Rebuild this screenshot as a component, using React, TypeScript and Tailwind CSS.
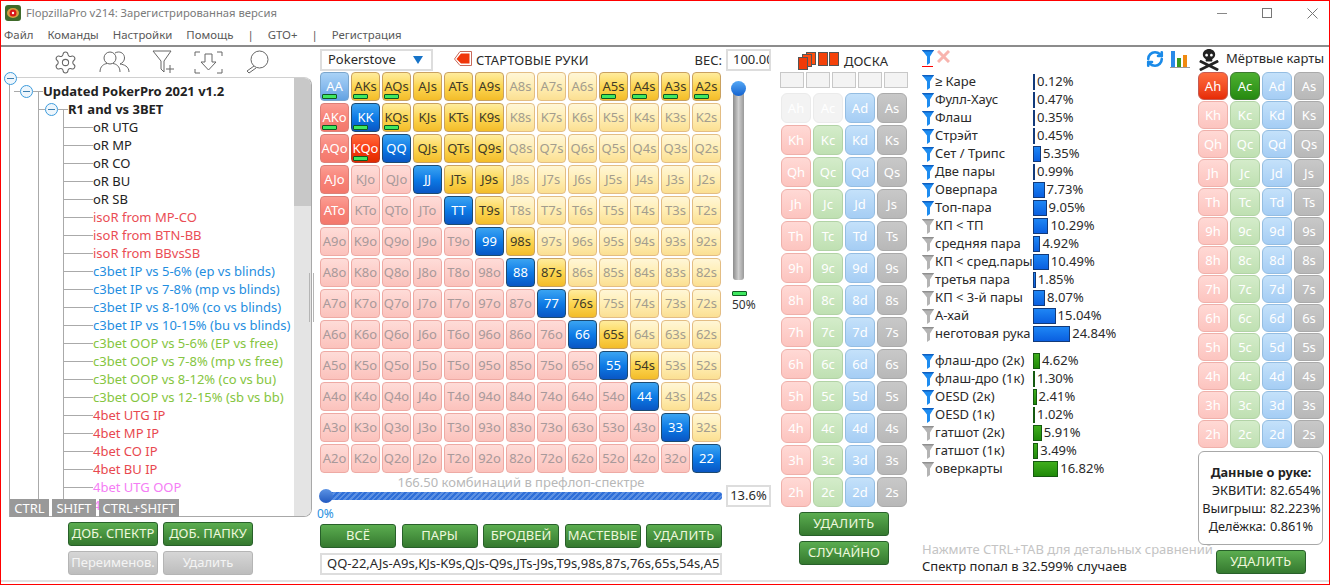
import { Settings, RefreshCw } from "lucide-react";
import { FaSkullCrossbones } from "react-icons/fa";

const FONT = "font-['Noto_Sans','Liberation_Sans',sans-serif]";

const RANKS = ["A", "K", "Q", "J", "T", "9", "8", "7", "6", "5", "4", "3", "2"];

const cellStyles = {
  gold: "bg-linear-to-b from-[#ffec9c] via-[#fcd650] to-[#f3bc28] border-[#c9a160] text-[#3f3a28]",
  paleGold: "bg-linear-to-b from-[#fff6d6] via-[#ffeeb4] to-[#fbdf92] border-[#e3bd84] text-[#a39d8e]",
  salmon: "bg-linear-to-b from-[#fb9d93] via-[#f88378] to-[#f3786c] border-[#dc8078] text-white",
  pink: "bg-linear-to-b from-[#fedcd8] via-[#fdcfca] to-[#fbc2bc] border-[#eeaaa4] text-[#a8999a]",
  red: "bg-linear-to-b from-[#ff6a3a] via-[#f93b10] to-[#e02a00] border-[#b8392a] text-white",
  blue: "bg-linear-to-b from-[#3aa4f2] via-[#0d7be6] to-[#0a56c4] border-[#1d4a70] text-white",
  lightBlue: "bg-linear-to-b from-[#a9d2f6] via-[#8abcee] to-[#62a2e2] border-[#7ba6cc] text-white",
};

const goldHands = new Set([
  "AKs", "AQs", "AJs", "ATs", "A9s", "A5s", "A4s", "A3s", "A2s",
  "KQs", "KJs", "KTs", "K9s",
  "QJs", "QTs", "Q9s",
  "JTs", "J9s", "T9s", "98s", "87s", "76s", "65s", "54s",
]);
const salmonHands = new Set(["AKo", "AQo", "AJo", "ATo"]);
const barHands = new Set(["AA", "AKs", "AQs", "A5s", "A4s", "A3s", "A2s", "AKo", "KK", "KQs", "KQo"]);

function handStyle(hand: string) {
  if (hand === "AA") return cellStyles.lightBlue;
  if (hand.length === 2) return cellStyles.blue;
  if (hand === "KQo") return cellStyles.red;
  if (goldHands.has(hand)) return cellStyles.gold;
  if (salmonHands.has(hand)) return cellStyles.salmon;
  return hand.endsWith("s") ? cellStyles.paleGold : cellStyles.pink;
}

function HandCell({ hand }: { hand: string }) {
  return (
    <div
      className={`relative flex h-[29px] w-[29px] items-center justify-center rounded-[4px] border text-[13px] leading-none ${handStyle(hand)}`}
    >
      <span className="-mt-px">{hand}</span>
      {barHands.has(hand) && (
        <span className="absolute bottom-px left-[1px] h-[5px] w-[15px] rounded-[1px] border border-[#0d5a20] bg-[#3fe860]" />
      )}
    </div>
  );
}

const suitStyles: Record<string, string> = {
  h: "bg-linear-to-b from-[#ffd9d5] to-[#fcc4bf] border-[#efb0aa]",
  c: "bg-linear-to-b from-[#d4ecca] to-[#bfe0b2] border-[#b2d3a6]",
  d: "bg-linear-to-b from-[#c4e1fa] to-[#a5cdf4] border-[#94bde2]",
  s: "bg-linear-to-b from-[#c8c8c8] to-[#b8b8b8] border-[#aaaaaa]",
};

function CardCell({ card, tall, variant }: { card: string; tall?: boolean; variant?: "faded" | "hotRed" | "hotGreen" }) {
  let style = suitStyles[card[1]];
  if (variant === "faded") style = "bg-[#f3f3f3] border-[#ebebeb]";
  if (variant === "hotRed") style = "bg-linear-to-b from-[#ff6b3c] to-[#e62a04] border-[#c65a50]";
  if (variant === "hotGreen") style = "bg-linear-to-b from-[#4cb030] to-[#268a10] border-[#3d7a30]";
  return (
    <div
      className={`flex w-[30px] items-center justify-center rounded-[6px] border text-[13px] leading-none text-white ${tall ? "h-[30px]" : "h-[28px]"} ${style}`}
    >
      {card}
    </div>
  );
}

function GreenButton({ children, className = "" }: { children: React.ReactNode; className?: string }) {
  return (
    <button className={`flex h-[24px] items-center justify-center rounded-[3px] border border-[#28602a] bg-linear-to-b from-[#5bad50] to-[#35792f] text-[13px] whitespace-nowrap text-[#eef8dc] ${className}`}>
      {children}
    </button>
  );
}

function GrayButton({ children }: { children: React.ReactNode }) {
  return (
    <button className="flex h-[24px] w-[90px] items-center justify-center rounded-[3px] border border-[#b5b5b5] bg-linear-to-b from-[#d6d6d6] to-[#bdbdbd] text-[13px] whitespace-nowrap text-[#f4f4f4]">
      {children}
    </button>
  );
}

function Toggle() {
  return (
    <span className="flex h-[13px] w-[13px] shrink-0 items-center justify-center rounded-full border-[1.5px] border-[#3d9bdc] bg-[#eef6fc]">
      <span className="h-px w-[7px] bg-[#3d7fb0]" />
    </span>
  );
}

const treeItems: [string, string][] = [
  ["oR UTG", "text-[#222222]"],
  ["oR MP", "text-[#222222]"],
  ["oR CO", "text-[#222222]"],
  ["oR BU", "text-[#222222]"],
  ["oR SB", "text-[#222222]"],
  ["isoR from MP-CO", "text-[#ea4d55]"],
  ["isoR from BTN-BB", "text-[#ea4d55]"],
  ["isoR from BBvsSB", "text-[#ea4d55]"],
  ["c3bet IP vs 5-6% (ep vs blinds)", "text-[#1f8ee0]"],
  ["c3bet IP vs 7-8% (mp vs blinds)", "text-[#1f8ee0]"],
  ["c3bet IP vs 8-10% (co vs blinds)", "text-[#1f8ee0]"],
  ["c3bet IP vs 10-15% (bu vs blinds)", "text-[#1f8ee0]"],
  ["c3bet OOP vs 5-6% (EP vs free)", "text-[#85c540]"],
  ["c3bet OOP vs 7-8% (mp vs free)", "text-[#85c540]"],
  ["c3bet OOP vs 8-12% (co vs bu)", "text-[#85c540]"],
  ["c3bet OOP vs 12-15% (sb vs bb)", "text-[#85c540]"],
  ["4bet UTG IP", "text-[#e8484f]"],
  ["4bet MP IP", "text-[#e8484f]"],
  ["4bet CO IP", "text-[#e8484f]"],
  ["4bet BU IP", "text-[#e8484f]"],
  ["4bet UTG OOP", "text-[#f57df5]"],
  ["4bet MP OOP", "text-[#f57df5]"],
];

function Tree() {
  return (
    <div className="relative ml-[8px] flex h-[440px] w-[303px] rounded-r-[8px] border border-[#a8a8a8] border-t-[#d0d0d0]">
      <div className="flex-1 overflow-hidden pt-[4px] text-[13px] leading-[18px] whitespace-nowrap">
        <div className="flex h-[18px] items-center">
          <span className="ml-[4px] h-px w-[6px] bg-[#aaaaaa]" />
          <Toggle />
          <span className="h-px w-[10px] bg-[#aaaaaa]" />
          <span className="font-bold text-[#222222]">Updated PokerPro 2021 v1.2</span>
        </div>
        <div className="-mt-[9px] ml-[28px] border-l border-[#aaaaaa] pt-[9px]">
          <div className="flex h-[18px] items-center">
            <span className="h-px w-[6px] bg-[#aaaaaa]" />
            <Toggle />
            <span className="h-px w-[10px] bg-[#aaaaaa]" />
            <span className="font-bold text-[#222222]">R1 and vs 3BET</span>
          </div>
          <div className="-mt-[9px] ml-[24px] border-l border-[#aaaaaa] pt-[9px]">
            {treeItems.map(([label, color]) => (
              <div key={label} className="flex h-[18px] items-center">
                <span className="h-px w-[29px] bg-[#aaaaaa]" />
                <span className={color}>{label}</span>
              </div>
            ))}
          </div>
        </div>
      </div>
      <div className="w-[17px] overflow-hidden rounded-r-[7px] bg-[#e4e4e4]">
        <div className="h-[128px] bg-[#c8c8c8]" />
      </div>
      {/* root toggle and the key tabs sit over the tree frame */}
      <div className="absolute -top-[6px] -left-[6px]">
        <Toggle />
      </div>
      <div className="absolute right-[-3px] top-[195px] h-[49px] w-[5px] border-x border-[#b5b5b5]" />
      <div className="absolute -bottom-px left-0 flex h-[18px] text-[13px] leading-[18px] text-white">
        <span className="w-[39px] bg-[#999999] text-center">CTRL</span>
        <span className="ml-[3px] w-[44px] bg-[#999999] text-center">SHIFT</span>
        <span className="ml-[3px] w-[80px] bg-[#999999] text-center">CTRL+SHIFT</span>
      </div>
    </div>
  );
}

function PeopleIcon() {
  return (
    <svg width="31" height="22" viewBox="0 0 31 22" fill="none" stroke="#666666" strokeWidth="1">
      <circle cx="11" cy="7" r="6" />
      <path d="M1 21C1 15 5 13 8 12.5M14 12.5C17 13 21 15 21 21" />
      <path d="M16 2C17 1.3 18.5 1 19.5 1C23 1 25.5 3.5 25.5 7C25.5 10 23.5 12 21 13C25 13.5 30 15.5 30 21" />
    </svg>
  );
}

function FunnelPlus() {
  return (
    <svg width="23" height="24" viewBox="0 0 23 24" fill="none" stroke="#666666" strokeWidth="1">
      <path d="M1 1H19L12 11V22L9 19V11Z" />
      <path d="M14 19H22M18 15V23" />
    </svg>
  );
}

function FrameArrow() {
  return (
    <svg width="29" height="23" viewBox="0 0 29 23" fill="none" stroke="#666666" strokeWidth="1">
      <path d="M1 5V1H6M23 1H28V5M1 18V22H6M23 22H28V18" />
      <path d="M11 3V11H7L14.5 19L22 11H18V3Z" />
    </svg>
  );
}

function SearchFlip() {
  return (
    <svg width="23" height="24" viewBox="0 0 23 24" fill="none" stroke="#666666" strokeWidth="1">
      <circle cx="13.5" cy="9.5" r="8.5" />
      <path d="M8 16L1 21L3 23L10 18" />
    </svg>
  );
}

function Funnel({ color }: { color: "blue" | "gray" }) {
  const fill = color === "blue" ? "#1d8cf0" : "#b4b4b4";
  const dark = color === "blue" ? "#0f5fc0" : "#8f8f8f";
  return (
    <svg width="12" height="15" viewBox="0 0 12 15" className="shrink-0">
      <path d="M0 0H12L8 6.5V13L5 15V6.5Z" fill={fill} />
      <path d="M0 0H12L11 1.5H1Z" fill={dark} />
    </svg>
  );
}

function RedCards({ stacked }: { stacked?: boolean }) {
  if (stacked) {
    return (
      <svg width="18" height="18" viewBox="0 0 18 18">
        <rect x="8.5" y="0.5" width="9" height="12" fill="#ff5010" stroke="#555" />
        <rect x="4.5" y="2.5" width="9" height="12" fill="#ff4a10" stroke="#555" />
        <rect x="0.5" y="5.5" width="9" height="12" fill="#f03a08" stroke="#555" />
      </svg>
    );
  }
  return (
    <svg width="10" height="14" viewBox="0 0 10 14">
      <rect x="0.5" y="0.5" width="9" height="13" fill="#f4420a" stroke="#555" />
    </svg>
  );
}

const madeHands: [string, number, "blue" | "gray"][] = [
  ["≥ Каре", 0.12, "blue"],
  ["Фулл-Хаус", 0.47, "blue"],
  ["Флаш", 0.35, "blue"],
  ["Стрэйт", 0.45, "blue"],
  ["Сет / Трипс", 5.35, "blue"],
  ["Две пары", 0.99, "blue"],
  ["Оверпара", 7.73, "blue"],
  ["Топ-пара", 9.05, "blue"],
  ["КП < ТП", 10.29, "gray"],
  ["средняя пара", 4.92, "gray"],
  ["КП < сред.пары", 10.49, "gray"],
  ["третья пара", 1.85, "gray"],
  ["КП < 3-й пары", 8.07, "gray"],
  ["А-хай", 15.04, "gray"],
  ["неготовая рука", 24.84, "gray"],
];

const draws: [string, number, "blue" | "gray"][] = [
  ["флаш-дро (2к)", 4.62, "blue"],
  ["флаш-дро (1к)", 1.3, "blue"],
  ["OESD (2к)", 2.41, "blue"],
  ["OESD (1к)", 1.02, "blue"],
  ["гатшот (2к)", 5.91, "gray"],
  ["гатшот (1к)", 3.49, "gray"],
  ["оверкарты", 16.82, "gray"],
];

function StatRow({ label, pct, funnel, green }: { label: string; pct: number; funnel: "blue" | "gray"; green?: boolean }) {
  return (
    <div className="flex h-[18px] items-center text-[13px] text-[#2a2a2a]">
      <span className="flex w-[13px] justify-start"><Funnel color={funnel} /></span>
      <span className="w-[98px] whitespace-nowrap">{label}</span>
      <span
        className={`h-[16px] border ${green ? "border-[#155a10] bg-linear-to-b from-[#3fae1c] to-[#1f8a08]" : "border-[#123a7a] bg-linear-to-b from-[#1f86f5] to-[#0b5fe0]"}`}
        style={{ width: Math.max(1, pct * 1.5) }}
      />
      <span className="ml-[2px]">{pct.toFixed(2)}%</span>
    </div>
  );
}

export default function App() {
  const suits = ["h", "c", "d", "s"];
  return (
    <div className={`box-border flex h-[585px] w-[1330px] flex-col overflow-hidden border border-[#ff0000] bg-white ${FONT}`}>
      {/* title bar */}
      <div className="flex h-[24px] items-center text-[11.25px] text-[#7b7b7b]">
        <svg width="16" height="16" viewBox="0 0 16 16" className="ml-[4px] mr-[5px]">
          <rect width="16" height="16" rx="3" fill="#3f6a2a" />
          <ellipse cx="8" cy="8" rx="6" ry="5" fill="#d8a040" />
          <circle cx="8" cy="8" r="3.5" fill="#d81818" />
          <circle cx="8" cy="8" r="1.2" fill="#ffffff" />
        </svg>
        <span>FlopzillaPro v214: Зарегистрированная версия</span>
        <div className="ml-auto flex items-center">
          <span className="h-px w-[10px] bg-[#888888]" />
          <span className="ml-[35px] h-[10px] w-[10px] border border-[#777777]" />
          <svg width="11" height="11" viewBox="0 0 11 11" stroke="#777777" className="ml-[35px] mr-[11px]">
            <path d="M0.5 0.5L10.5 10.5M10.5 0.5L0.5 10.5" />
          </svg>
        </div>
      </div>

      {/* menu */}
      <div className="flex h-[22px] items-center gap-[14px] border-b-2 border-[#8c8c8c] pl-[3px] text-[11.4px] text-[#595959]">
        <span>Файл</span>
        <span>Команды</span>
        <span>Настройки</span>
        <span>Помощь</span>
        <span>|</span>
        <span>GTO+</span>
        <span>|</span>
        <span>Регистрация</span>
      </div>

      <div className="flex flex-1">
        {/* ranges tree */}
        <div className="w-[319px]">
          <div className="flex h-[30px] items-center pl-[52px]">
            <Settings size={25} strokeWidth={1} color="#666666" />
            <span className="ml-[21px]"><PeopleIcon /></span>
            <span className="ml-[22px]"><FunnelPlus /></span>
            <span className="ml-[19px]"><FrameArrow /></span>
            <span className="ml-[23px]"><SearchFlip /></span>
          </div>
          <Tree />
          <div className="mt-[5px] ml-[67px] flex gap-[5px]">
            <GreenButton className="w-[90px]">ДОБ. СПЕКТР</GreenButton>
            <GreenButton className="w-[90px]">ДОБ. ПАПКУ</GreenButton>
          </div>
          <div className="mt-[5px] ml-[67px] flex gap-[5px]">
            <GrayButton>Переименов.</GrayButton>
            <GrayButton>Удалить</GrayButton>
          </div>
        </div>

        {/* hand grid */}
        <div className="w-[456px]">
          <div className="flex h-[25px] items-start pt-[2px] text-[13px] text-[#2a2a2a]">
            <div className="flex h-[22px] w-[113px] items-center justify-between border-2 border-[#dddddd] pr-[8px] pl-[6px]">
              <span>Pokerstove</span>
              <span className="border-x-[5px] border-t-[8px] border-x-transparent border-t-[#1673c8]" />
            </div>
            <svg width="18" height="18" viewBox="0 0 18 18" className="mt-px ml-[21px]">
              <path d="M0.5 9L6 1.5H17.5V15.5H6Z" fill="#ffffff" stroke="#c86a5a" />
              <path d="M2.5 9L7 3.5H15.5V13.5H7Z" fill="#f0360a" />
            </svg>
            <span className="mt-[2px] ml-[4px] tracking-[0.1px]">СТАРТОВЫЕ РУКИ</span>
            <span className="mt-[2px] ml-auto">ВЕС:</span>
            <div className="ml-[4px] mr-[5px] flex h-[22px] w-[45px] items-center overflow-hidden border-2 border-[#dddddd] pl-[5px] whitespace-nowrap">
              100.00
            </div>
          </div>
          <div className="flex">
            <div className="grid w-[401px] grid-cols-[repeat(13,29px)] gap-[2px]">
              {RANKS.map((rowRank, i) =>
                RANKS.map((colRank, j) => {
                  const hand = i === j ? rowRank + colRank : i < j ? `${rowRank}${colRank}s` : `${colRank}${rowRank}o`;
                  return <HandCell key={hand} hand={hand} />;
                })
              )}
            </div>
            <div className="ml-[9px] flex flex-col">
              <div className="mt-[9px] ml-px flex w-[15px] flex-col items-center">
                <span className="z-10 h-[15px] w-[15px] rounded-full bg-linear-to-b from-[#55a8f5] to-[#1262d0]" />
                <span className="-mt-[4px] h-[188px] w-[11px] rounded-b-[3px] bg-linear-to-r from-[#8c8c8c] via-[#cfcfcf] to-[#9a9a9a]" />
              </div>
              <span className="mt-[11px] ml-[2px] h-[5px] w-[15px] rounded-[1px] border border-[#0d5a20] bg-[#3fe860]" />
              <span className="mt-[1px] ml-[2px] text-[12px] leading-[16px] text-[#333333]">50%</span>
            </div>
          </div>
          <div className="mt-[2px] flex">
            <div className="w-[402px]">
              <div className="h-[15px] text-center text-[13px] leading-[15px] text-[#b8b8b8]">166.50 комбинаций в префлоп-спектре</div>
              <div className="flex h-[12px] items-center">
                <span className="z-10 -ml-px h-[14px] w-[14px] shrink-0 rounded-full bg-linear-to-b from-[#5c93e4] to-[#2259c0]" />
                <span className="-ml-[2px] h-[8px] flex-1 rounded-r-[3px] bg-[repeating-linear-gradient(135deg,#2f6fd8,#2f6fd8_2px,#5c90e2_2px,#5c90e2_4px)]" />
              </div>
              <div className="-ml-[3px] h-[20px] text-[12px] leading-[24px] text-[#2a8fe0]">0%</div>
            </div>
            <div className="mt-[10px] ml-[4px] flex h-[22px] w-[45px] items-center justify-center border-2 border-[#dddddd] text-[13px] text-[#2a2a2a]">
              13.6%
            </div>
          </div>
          <div className="mt-[2px] flex w-[402px] justify-between">
            <GreenButton className="w-[76px]">ВСЁ</GreenButton>
            <GreenButton className="w-[76px]">ПАРЫ</GreenButton>
            <GreenButton className="w-[76px]">БРОДВЕЙ</GreenButton>
            <GreenButton className="w-[76px]">МАСТЕВЫЕ</GreenButton>
            <GreenButton className="w-[76px] tracking-[0.4px]">УДАЛИТЬ</GreenButton>
          </div>
          <div className="mt-[5px] flex h-[22px] w-[402px] items-center overflow-hidden border-2 border-[#dddddd] pl-[5px] text-[13px] whitespace-nowrap text-[#2a2a2a]">
            QQ-22,AJs-A9s,KJs-K9s,QJs-Q9s,JTs-J9s,T9s,98s,87s,76s,65s,54s,A5s,A4s,A3s,A2s
          </div>
        </div>

        {/* board */}
        <div className="w-[140px] pl-[4px]">
          <div className="flex h-[25px] items-start pt-[5px] pl-[18px] text-[13px] text-[#2a2a2a]">
            <RedCards stacked />
            <span className="ml-[2px]"><RedCards /></span>
            <span className="ml-px"><RedCards /></span>
            <span className="ml-[5px]">ДОСКА</span>
          </div>
          <div className="flex gap-[2px]">
            {[0, 1, 2, 3, 4].map((i) => (
              <span key={i} className="h-[16px] w-[24px] border border-[#c8c8c8] bg-[#f3f3f3]" />
            ))}
          </div>
          <div className="mt-[5px] ml-px grid w-[126px] grid-cols-[repeat(4,30px)] gap-[2px]">
            {RANKS.map((r) =>
              suits.map((s) => {
                const card = r + s;
                return <CardCell key={card} card={card} tall variant={card === "Ah" || card === "Ac" ? "faded" : undefined} />;
              })
            )}
          </div>
          <div className="mt-[5px] ml-[19px] flex flex-col gap-[5px]">
            <GreenButton className="w-[90px] tracking-[0.4px]">УДАЛИТЬ</GreenButton>
            <GreenButton className="w-[90px]">СЛУЧАЙНО</GreenButton>
          </div>
        </div>

        {/* hand stats */}
        <div className="w-[281px] pl-[6px]">
          <div className="flex h-[26px] items-start pt-[3px]">
            <div className="flex flex-col">
              <Funnel color="blue" />
              <span className="mt-px h-[1px] w-[11px] bg-[#ff0000]" />
            </div>
            <svg width="13" height="13" viewBox="0 0 13 13" stroke="#f8b4ae" strokeWidth="3" className="ml-[3px]">
              <path d="M1 1L12 12M12 1L1 12" />
            </svg>
            <div className="ml-auto mr-[7px] flex items-start">
              <RefreshCw size={18} strokeWidth={3.5} color="#1a8ae8" />
              <svg width="20" height="18" viewBox="0 0 20 18" className="ml-[6px]">
                <rect x="1" y="1" width="4" height="16" fill="#2a8ae8" />
                <rect x="7" y="8" width="4" height="9" fill="#3a9a20" />
                <rect x="13" y="5" width="4" height="12" fill="#f08a10" />
                <rect y="17" width="20" height="1" fill="#999999" />
              </svg>
            </div>
          </div>
          {madeHands.map(([label, pct, funnel]) => (
            <StatRow key={label} label={label} pct={pct} funnel={funnel} />
          ))}
          <div className="mt-[9px]">
            {draws.map(([label, pct, funnel]) => (
              <StatRow key={label} label={label} pct={pct} funnel={funnel} green />
            ))}
          </div>
          <div className="mt-[62px] h-[18px] text-[13px] leading-[18px] whitespace-nowrap text-[#c4c4c4]">Нажмите CTRL+TAB для детальных сравнений</div>
          <div className="h-[17px] text-[13px] leading-[17px] whitespace-nowrap text-[#222222]">Спектр попал в 32.599% случаев</div>
        </div>

        {/* dead cards */}
        <div className="w-[132px] pl-px">
          <div className="flex h-[25px] items-start pt-[2px] text-[13px] text-[#2a2a2a]">
            <FaSkullCrossbones size={22} color="#222222" />
            <span className="ml-[6px] whitespace-nowrap">Мёртвые карты</span>
          </div>
          <div className="grid w-[126px] grid-cols-[repeat(4,30px)] gap-x-[2px] gap-y-px">
            {RANKS.map((r) =>
              suits.map((s) => {
                const card = r + s;
                return (
                  <CardCell
                    key={card}
                    card={card}
                    variant={card === "Ah" ? "hotRed" : card === "Ac" ? "hotGreen" : undefined}
                  />
                );
              })
            )}
          </div>
          <div className="mt-[3px] h-[94px] w-[125px] rounded-[6px] border border-[#a8a8a8] pt-[11px] text-[12.75px] leading-[18px] text-[#222222]">
            <div className="pl-[1px] text-center font-bold">Данные о руке:</div>
            {[
              ["ЭКВИТИ:", "82.654%"],
              ["Выигрыш:", "82.223%"],
              ["Делёжка:", "0.861%"],
            ].map(([label, value]) => (
              <div key={label} className="flex whitespace-nowrap">
                <span className="w-[67px] text-right">{label}</span>
                <span className="ml-[4px]">{value}</span>
              </div>
            ))}
          </div>
          <GreenButton className="mt-[5px] ml-[18px] w-[90px] tracking-[0.4px]">УДАЛИТЬ</GreenButton>
        </div>
      </div>
      <div className="h-[4px] border-t-2 border-[#e2e2e2]" />
    </div>
  );
}
